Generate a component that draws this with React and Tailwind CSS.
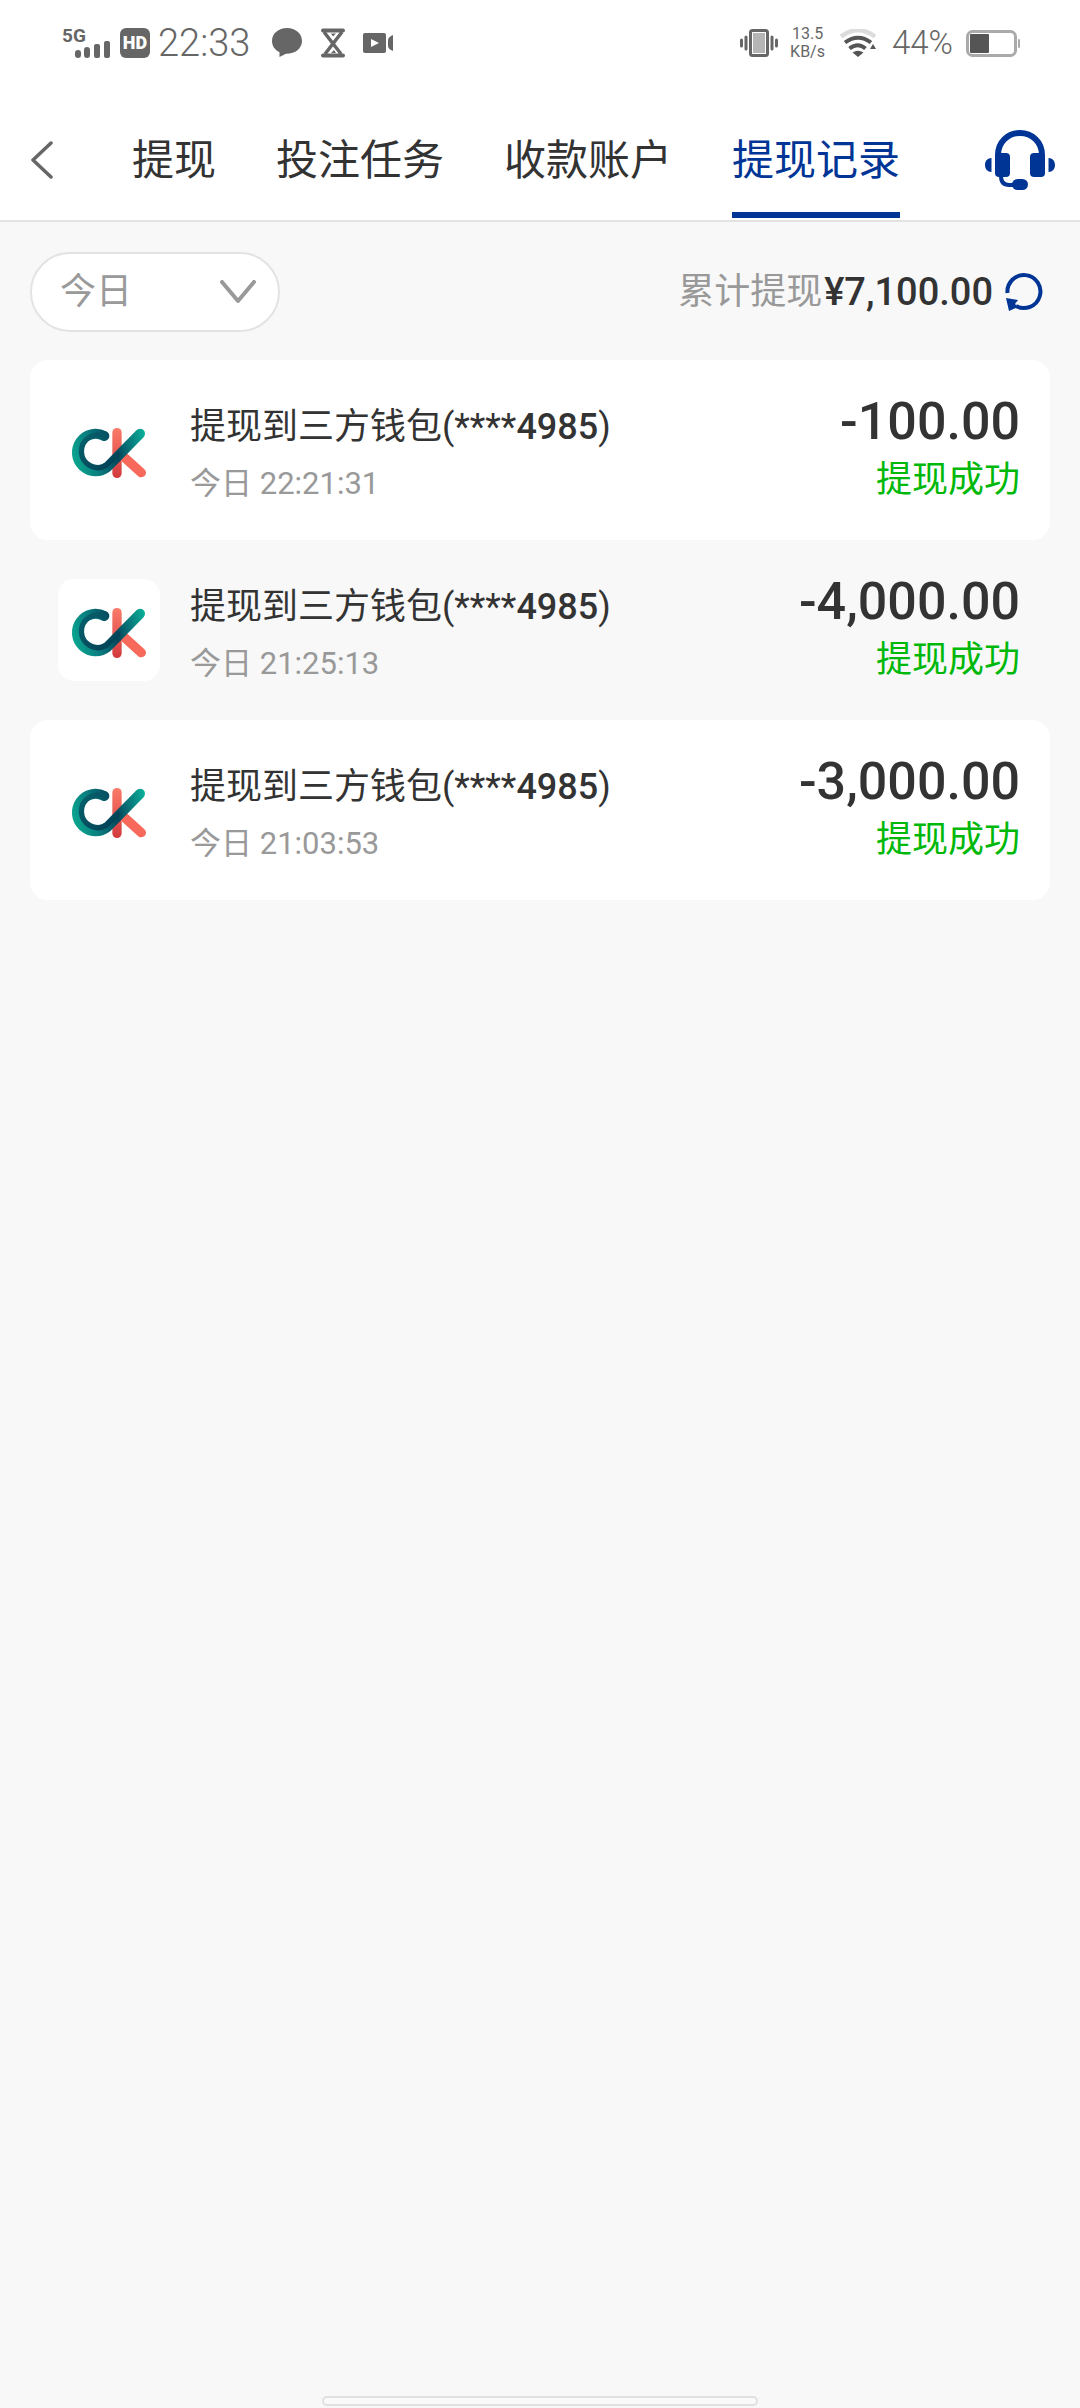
import { useState } from 'react';

const TABS = ['提现', '投注任务', '收款账户', '提现记录'];

const RECORDS = [
  { id: 1, wallet: '三方钱包', account: '4985', time: '22:21:31', amount: '-100.00', status: '提现成功' },
  { id: 2, wallet: '三方钱包', account: '4985', time: '21:25:13', amount: '-4,000.00', status: '提现成功' },
  { id: 3, wallet: '三方钱包', account: '4985', time: '21:03:53', amount: '-3,000.00', status: '提现成功' },
];

function StatusBar() {
  return (
    <div className="flex h-[100px] items-center justify-between pr-[60px] pb-[14px] pl-[62px] text-[#666]">
      <div className="flex items-center">
        <svg className="overflow-visible" width="48" height="32" viewBox="0 0 48 32" fill="currentColor">
          <text x="0" y="15" fontSize="19" fontWeight="700">5G</text>
          <rect x="13" y="23" width="6" height="8" rx="3" />
          <rect x="22" y="20" width="6" height="11" rx="3" />
          <rect x="32" y="17" width="6" height="14" rx="2" />
          <rect x="42" y="14" width="6" height="17" rx="2" />
        </svg>
        <span className="ml-[10px] flex h-[30px] w-[30px] items-center justify-center rounded-md bg-[#666] text-lg font-black text-white">
          HD
        </span>
        <span className="ml-2 text-[38px] font-light">22:33</span>

        {/* 通知图标 */}
        <svg className="ml-[22px]" width="30" height="30" viewBox="0 0 30 30" fill="currentColor">
          <path d="M15 0C6.500 0 0 5.500 0 13c0 5 3 9 7.500 11.200V29l6.500-3.200C23 26 30 20.500 30 13 30 5.500 23.500 0 15 0z" />
        </svg>
        <svg className="ml-[19px]" width="24" height="30" viewBox="0 0 24 30" fill="none" stroke="currentColor">
          <path d="M2 2.500h20M2 27.500h20" strokeWidth="4" strokeLinecap="round" />
          <path d="M3 4l17 22M21 4L4 26" strokeWidth="3.500" />
          <path d="M8 5.500h8l-4 4zM8 25h9l-4-5z" fill="#fff" stroke="none" />
          <path d="M10 5.500h5l-3 3zM10 25h5l-2-3z" fill="currentColor" stroke="none" />
        </svg>
        <svg className="ml-[18px]" width="30" height="20" viewBox="0 0 30 20">
          <rect width="23" height="20" rx="2" fill="currentColor" />
          <path d="M8 6l8 4-8 4z" fill="#fff" />
          <path d="M30 2v16c-3-1-5-3-5-5V7c0-2 2-4 5-5z" fill="currentColor" />
        </svg>
      </div>

      <div className="flex items-center">
        <svg width="38" height="28" viewBox="0 0 38 28" fill="none" stroke="currentColor">
          <rect x="10.500" y="1.500" width="17" height="25" rx="2" strokeWidth="3" />
          <rect x="13" y="4" width="12" height="20" fill="#b5b5b5" stroke="none" />
          <path d="M1.500 11v6M36.500 11v6M6 8v12M32 8v12" strokeWidth="3" strokeLinecap="round" />
        </svg>
        <div className="ml-3 flex flex-col items-center text-base leading-[18px]">
          <span>13.5</span>
          <span>KB/s</span>
        </div>
        <svg className="ml-[15px]" width="36" height="28" viewBox="0 0 36 28" fill="none">
          <path d="M1 7.500Q18-5 35 7.500" stroke="#dcdcdc" strokeWidth="4.500" />
          <path d="M5 13.500Q18 4 31 13.500M9.500 19.500Q18 13 25.500 19.500" stroke="#555" strokeWidth="4" />
          <path d="M12.500 23.500q5.500-3.500 11 0L18 28z" fill="#555" />
          <path d="M30 20l3-5 3 5z" fill="#555" />
        </svg>
        <span className="ml-4 text-[33px] font-light">44%</span>
        <svg className="ml-[13px]" width="54" height="27" viewBox="0 0 54 27">
          <rect x="1.500" y="1.500" width="48" height="24" rx="5" fill="none" stroke="#aaa" strokeWidth="3" />
          <rect x="4" y="4" width="19" height="19" rx="1" fill="#555" />
          <rect x="52" y="9" width="2" height="9" rx="1" fill="#aaa" />
        </svg>
      </div>
    </div>
  );
}

function HeadsetIcon() {
  return (
    <svg width="70" height="60" viewBox="0 0 70 60" fill="#003596">
      <path d="M13 28V25C13 12 23 3 35 3s22 9 22 22v3" fill="none" stroke="#003596" strokeWidth="6" />
      <rect x="10" y="23" width="15" height="24" rx="4" />
      <rect x="45" y="23" width="15" height="24" rx="4" />
      <path d="M6.500 28v14C2.500 42 0 39 0 35s2.500-7 6.500-7zM63.500 28v14c4 0 6.500-3 6.500-7s-2.500-7-6.500-7z" />
      <path d="M16 46c0 6 3 9 8 9h6" fill="none" stroke="#003596" strokeWidth="4" />
      <rect x="27" y="49" width="16" height="11" rx="5.500" />
    </svg>
  );
}

function WalletLogo() {
  return (
    <svg className="h-[102px] w-[102px] shrink-0 rounded-2xl bg-white" viewBox="24 27 306 306" fill="none" strokeLinecap="round">
      <defs>
        <linearGradient id="teal" gradientUnits="userSpaceOnUse" x1="66" y1="188" x2="285" y2="120">
          <stop offset="0" stopColor="#0aa38e" />
          <stop offset="0.25" stopColor="#0a7f80" />
          <stop offset="0.55" stopColor="#04465a" />
          <stop offset="0.75" stopColor="#08777b" />
          <stop offset="1" stopColor="#0bb39a" />
        </linearGradient>
        <linearGradient id="inner" gradientUnits="userSpaceOnUse" x1="90" y1="140" x2="190" y2="240">
          <stop offset="0" stopColor="#07606c" />
          <stop offset="1" stopColor="#033f55" />
        </linearGradient>
        <linearGradient id="stem" gradientUnits="userSpaceOnUse" x1="201" y1="115" x2="201" y2="265">
          <stop offset="0" stopColor="#fb7b6a" />
          <stop offset="1" stopColor="#d23a3d" />
        </linearGradient>
      </defs>
      <path d="M201 128V250" stroke="url(#stem)" strokeWidth="28" />
      <path d="M216 196L274 248" stroke="#f7695a" strokeWidth="28" />
      <path d="M163 138A56 56 0 1 0 172 231L270 131" stroke="url(#teal)" strokeWidth="30" />
      <path d="M163 139A49 49 0 1 0 168 226L204 192" stroke="url(#inner)" strokeWidth="16" />
    </svg>
  );
}

function RecordItem({ record }) {
  return (
    <li className="flex h-[180px] items-center rounded-[18px] pr-[30px] pl-7 odd:bg-white">
      <WalletLogo />
      <div className="ml-[30px] flex flex-1 flex-col pt-2">
        <span className="text-4xl leading-[60px] text-[#333]">
          提现到{record.wallet}(****<span className="font-medium">{record.account}</span>)
        </span>
        <span className="text-[31px] leading-[54px] text-[#999]">今日 {record.time}</span>
      </div>
      <div className="flex flex-col items-end pt-1">
        <span className="text-[52px] leading-[56px] font-medium text-[#333]">{record.amount}</span>
        <span className="text-4xl leading-[60px] text-[#00b80a]">{record.status}</span>
      </div>
    </li>
  );
}

export default function App() {
  const [activeTab, setActiveTab] = useState('提现记录');
  const [range, setRange] = useState('today');

  return (
    <div className="flex min-h-screen flex-col bg-[#f8f8f8] font-[Roboto,'Noto_Sans_CJK_SC',sans-serif]">
      <header className="border-b-2 border-[#e3e3e3] bg-white">
        <StatusBar />
        <nav className="flex h-[120px] items-center pr-[25px] pl-[30px]">
          <button type="button" aria-label="返回" className="w-[102px]">
            <svg width="24" height="38" viewBox="0 0 24 38" fill="none" stroke="#666" strokeWidth="3.500" strokeLinecap="round" strokeLinejoin="round">
              <path d="M21 2L3 19l18 17" />
            </svg>
          </button>
          <div className="flex h-[116px] flex-1 gap-[60px]">
            {TABS.map((tab) => (
              <button
                key={tab}
                type="button"
                onClick={() => setActiveTab(tab)}
                className={
                  tab === activeTab
                    ? 'border-y-[6px] border-t-transparent border-b-[#003596] text-[42px] whitespace-nowrap text-[#003596]'
                    : 'border-y-[6px] border-transparent text-[42px] whitespace-nowrap text-[#333]'
                }
              >
                {tab}
              </button>
            ))}
          </div>
          <button type="button" aria-label="客服">
            <HeadsetIcon />
          </button>
        </nav>
      </header>

      <main className="flex-1 px-[30px] pt-[30px]">
        <div className="mb-7 flex items-center justify-between">
          <div className="relative">
            <select
              aria-label="日期"
              value={range}
              onChange={(e) => setRange(e.target.value)}
              className="h-20 w-[250px] appearance-none rounded-full border-2 border-[#e3e3e3] bg-white pl-7 text-4xl text-[#999]"
            >
              <option value="today">今日</option>
            </select>
            <svg className="pointer-events-none absolute top-[28px] right-6" width="36" height="24" viewBox="0 0 36 24" fill="none" stroke="#999" strokeWidth="4" strokeLinecap="round" strokeLinejoin="round">
              <path d="M2 2l16 19L34 2" />
            </svg>
          </div>
          <div className="flex items-center pr-[7px] text-4xl">
            <span className="text-[#999]">累计提现</span>
            <span className="ml-[2px] text-[38px] font-medium text-[#333]">¥7,100.00</span>
            <button type="button" aria-label="刷新" className="ml-3">
              <svg width="38" height="38" viewBox="0 0 38 38" fill="none">
                <path d="M2.500 20A16.500 16.500 0 1 1 11 33" stroke="#003596" strokeWidth="4" />
                <path d="M1 25l12 2-3 4 3 3-9 4z" fill="#003596" />
              </svg>
            </button>
          </div>
        </div>

        <ul>
          {RECORDS.map((record) => (
            <RecordItem key={record.id} record={record} />
          ))}
        </ul>
      </main>

      <div className="mx-auto mb-[2px] h-[10px] w-[436px] rounded-full border-2 border-[#e0e0e0] bg-[#fafafa]" />
    </div>
  );
}
